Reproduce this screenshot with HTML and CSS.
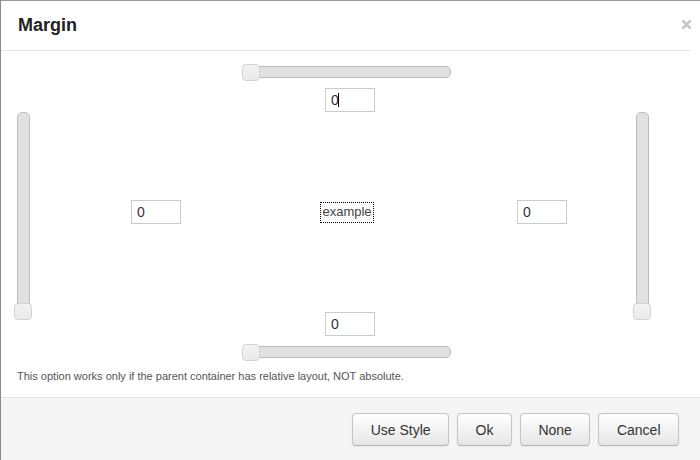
FILE: index.html
```html
<!DOCTYPE html>
<html>
<head>
<meta charset="utf-8">
<link rel="stylesheet" href="styles.css">
</head>
<body>
<div class="dialog">
  <div class="header">
    <h1 class="title">Margin</h1>
    <button class="close" aria-label="Close">
      <svg width="9" height="9" viewBox="0 0 9 9"><path d="M1 1 L8 8 M8 1 L1 8" stroke="#c6c6c6" stroke-width="2.6" stroke-linecap="square"/></svg>
    </button>
  </div>
  <div class="body">
    <div class="editor">
      <div class="vslider"><div class="vtrack"><div class="handle vhandle"></div></div></div>
      <div class="center">
        <div class="hslider"><div class="handle hhandle"></div></div>
        <div class="field focused"><input class="num" type="text" value="0"></div>
        <div class="midrow">
          <input class="num" type="text" value="0">
          <span class="example">example</span>
          <input class="num" type="text" value="0">
        </div>
        <div class="field bottom-field"><input class="num" type="text" value="0"></div>
        <div class="hslider bottom-slider"><div class="handle hhandle"></div></div>
      </div>
      <div class="vslider"><div class="vtrack"><div class="handle vhandle"></div></div></div>
    </div>
    <p class="note">This option works only if the parent container has relative layout, NOT absolute.</p>
  </div>
  <div class="footer">
    <button class="btn">Use Style</button>
    <button class="btn">Ok</button>
    <button class="btn">None</button>
    <button class="btn">Cancel</button>
  </div>
</div>
</body>
</html>
```

FILE: styles.css
```css
html, body {
  margin: 0;
  padding: 0;
  overflow: hidden;
  background: #ffffff;
}

.dialog {
  width: 720px;
  height: 470px;
  border-top: 1px solid #9a9a9a;
  border-left: 1px solid #8a8a8a;
  background: #fff;
  font-family: "Liberation Sans", Arial, sans-serif;
  color: #333;
}

.header {
  height: 49px;
  border-bottom: 1px solid #e5e5e5;
  display: flex;
  align-items: center;
  padding: 0 0 0 17px;
  width: 673px;
}

.title {
  margin: 0;
  font-size: 18px;
  font-weight: bold;
  color: #222;
  flex: 1;
  line-height: 20px;
  padding-bottom: 1px;
}

.close {
  border: 0;
  background: none;
  padding: 0;
  width: 9px;
  height: 9px;
  display: flex;
  margin-top: -2px;
}

.body {
  height: 346px;
  width: 699px;
  box-sizing: border-box;
  padding-left: 13px;
}

.editor {
  display: flex;
  align-items: flex-start;
}

.vslider {
  width: 18px;
  margin-top: 61px;
  display: flex;
  justify-content: center;
}

.vtrack {
  width: 13px;
  height: 206px;
  box-sizing: border-box;
  border: 1px solid #bdbdbd;
  border-radius: 5px;
  background: #e1e1e1;
  display: flex;
  flex-direction: column;
  justify-content: flex-end;
  align-items: center;
}

.handle {
  box-sizing: border-box;
  border: 1px solid #d3d3d3;
  border-radius: 4px;
  background: linear-gradient(#f2f2f2, #eaeaea);
  flex: none;
}

.vhandle {
  width: 18px;
  height: 17px;
  margin-bottom: -3px;
}

.center {
  width: 601px;
  box-sizing: border-box;
  padding-left: 35px;
  display: flex;
  flex-direction: column;
  align-items: center;
}

.hslider {
  width: 209px;
  height: 12px;
  box-sizing: border-box;
  border: 1px solid #bdbdbd;
  border-radius: 5px;
  background: #e1e1e1;
  display: flex;
  align-items: center;
  margin-top: 15px;
  margin-right: 7px;
}

.hhandle {
  width: 18px;
  height: 17px;
  margin-left: -1px;
}

.field {
  margin-top: 10px;
  display: flex;
  position: relative;
}

.focused::after {
  content: "";
  position: absolute;
  left: 13px;
  top: 5px;
  width: 1px;
  height: 14px;
  background: #000;
}

.num {
  width: 50px;
  height: 24px;
  box-sizing: border-box;
  border: 1px solid #c8ccd1;
  padding: 0 5px;
  margin: 0;
  font-family: "Liberation Sans", Arial, sans-serif;
  font-size: 14px;
  color: #333;
  background: #fff;
  outline: none;
}

.midrow {
  width: 100%;
  box-sizing: border-box;
  margin-top: 88px;
  padding: 0 66px 0 64px;
  display: flex;
  justify-content: space-between;
  align-items: center;
}

.example {
  font-size: 13px;
  color: #444;
  border: 1px dotted #000;
  padding: 1px 1px 2px 1px;
  line-height: 16px;
  margin-left: -4px;
}

.bottom-field {
  margin-top: 88px;
}

.bottom-slider {
  margin-top: 10px;
}

.note {
  margin: 12px 0 0 3px;
  font-size: 11px;
  line-height: 13px;
  color: #555;
}

.footer {
  width: 699px;
  box-sizing: border-box;
  border-top: 1px solid #e5e5e5;
  background: #f5f5f5;
  height: 80px;
  display: flex;
  justify-content: flex-end;
  align-items: flex-start;
  gap: 8px;
  padding: 15px 21px 0 0;
}

.btn {
  height: 33px;
  box-sizing: border-box;
  padding: 0 17.5px;
  border: 1px solid #c4c4c4;
  border-bottom-color: #b3b3b3;
  border-radius: 4px;
  background: linear-gradient(#ffffff, #e6e6e6);
  box-shadow: inset 0 1px 0 rgba(255,255,255,0.2), 0 1px 2px rgba(0,0,0,0.05);
  font-family: "Liberation Sans", Arial, sans-serif;
  font-size: 14px;
  color: #333;
}
```
